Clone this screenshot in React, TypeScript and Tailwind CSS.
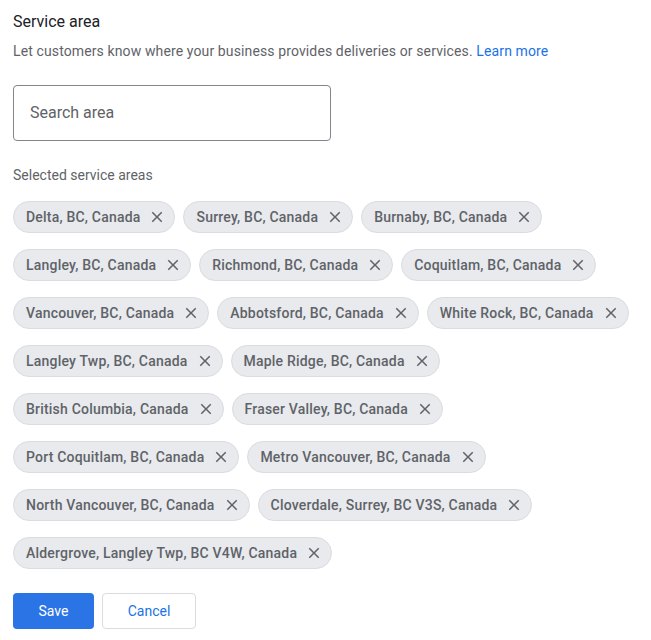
import React from "react";

const areas = [
  "Delta, BC, Canada",
  "Surrey, BC, Canada",
  "Burnaby, BC, Canada",
  "Langley, BC, Canada",
  "Richmond, BC, Canada",
  "Coquitlam, BC, Canada",
  "Vancouver, BC, Canada",
  "Abbotsford, BC, Canada",
  "White Rock, BC, Canada",
  "Langley Twp, BC, Canada",
  "Maple Ridge, BC, Canada",
  "British Columbia, Canada",
  "Fraser Valley, BC, Canada",
  "Port Coquitlam, BC, Canada",
  "Metro Vancouver, BC, Canada",
  "North Vancouver, BC, Canada",
  "Cloverdale, Surrey, BC V3S, Canada",
  "Aldergrove, Langley Twp, BC V4W, Canada",
];

function CloseIcon() {
  return (
    <svg width="18" height="18" viewBox="0 0 24 24" fill="#5f6368">
      <path d="M19 6.41 17.59 5 12 10.59 6.41 5 5 6.41 10.59 12 5 17.59 6.41 19 12 13.41 17.59 19 19 17.59 13.41 12z" />
    </svg>
  );
}

export default function App() {
  return (
    <div className="bg-white min-h-screen px-[13px] pt-[10px] font-['Roboto',sans-serif]">
      <h2 className="text-[16px] leading-6 text-[#202124]">Service area</h2>
      <p className="mt-[7px] text-[14px] leading-5 tracking-[0.12px] text-[#5f6368]">
        Let customers know where your business provides deliveries or services.{" "}
        <a className="text-[#1a73e8]">Learn more</a>
      </p>

      <div className="mt-[24px] w-[318px] h-[56px] border border-[#80868b] rounded-[4px] flex items-center px-4">
        <span className="text-[16px] text-[#5f6368]">Search area</span>
      </div>

      <div className="mt-[24px] text-[14px] leading-5 text-[#5f6368]">Selected service areas</div>

      <div className="mt-[16px] flex flex-wrap gap-x-2 gap-y-4">
        {areas.map((a) => (
          <div
            key={a}
            className="h-8 flex items-center gap-2 pl-3 pr-2 rounded-full bg-[#e8eaed] border border-[#dadce0]"
          >
            <span className="text-[14px] font-medium tracking-[0.2px] text-[#5f6368]">{a}</span>
            <CloseIcon />
          </div>
        ))}
      </div>

      <div className="mt-[24px] flex gap-2">
        <button className="w-[81px] h-9 rounded-[4px] bg-[#2b74e6] text-white text-[14px]">
          Save
        </button>
        <button className="w-[94px] h-9 rounded-[4px] border border-[#dadce0] text-[#1a73e8] text-[14px]">
          Cancel
        </button>
      </div>
    </div>
  );
}
